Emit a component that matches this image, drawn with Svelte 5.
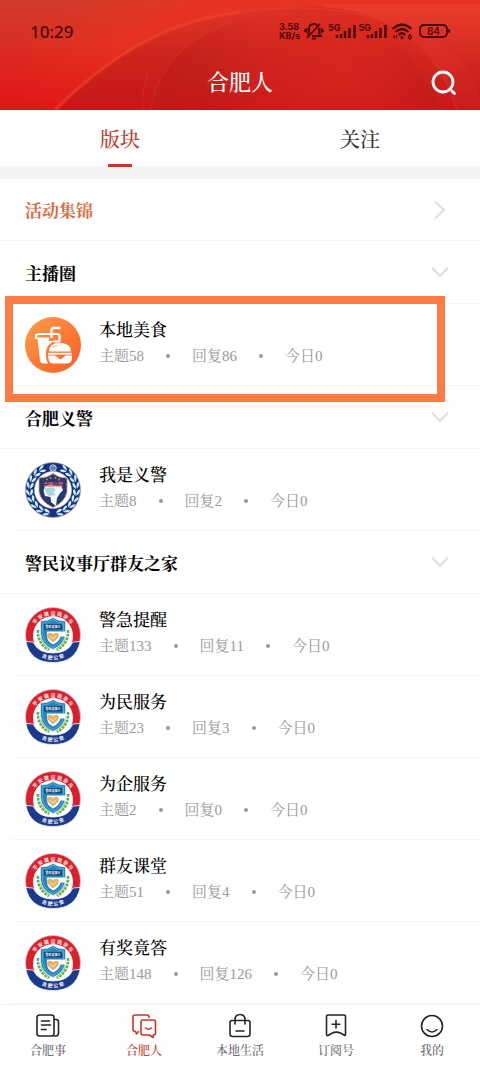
<script>
  const sections = [
    { name: '主播圈', boards: [{ name: '本地美食', logo: 'food', topics: 58, replies: 86, today: 0, marked: true }] },
    { name: '合肥义警', boards: [{ name: '我是义警', logo: 'wreath', topics: 8, replies: 2, today: 0 }] },
    {
      name: '警民议事厅群友之家',
      boards: [
        { name: '警急提醒', logo: 'police', topics: 133, replies: 11, today: 0 },
        { name: '为民服务', logo: 'police', topics: 23, replies: 3, today: 0 },
        { name: '为企服务', logo: 'police', topics: 2, replies: 0, today: 0 },
        { name: '群友课堂', logo: 'police', topics: 51, replies: 4, today: 0 },
        { name: '有奖竟答', logo: 'police', topics: 148, replies: 126, today: 0 }
      ]
    }
  ];
  const nav = [
    { name: '合肥事', icon: 'news' },
    { name: '合肥人', icon: 'chat', active: true },
    { name: '本地生活', icon: 'bag' },
    { name: '订阅号', icon: 'mark' },
    { name: '我的', icon: 'face' }
  ];
  // Angles of the laurel leaves, clockwise from the top of the ring
  const leaves = [28, 45, 62, 79, 96, 113, 130, 147, 164];
</script>

{#snippet food()}
  <svg class="logo" viewBox="0 0 56 56" aria-hidden="true">
    <defs>
      <linearGradient id="foodfill" x1="0" y1="0" x2="1" y2="1">
        <stop offset="0" stop-color="#ff9d4c" /><stop offset="1" stop-color="#fb5a21" />
      </linearGradient>
    </defs>
    <circle cx="28" cy="28" r="28" fill="url(#foodfill)" />
    <path d="M11 22V19.500Q11 17 13.500 17H32Q34.500 17 34.500 19.500V24.500H28" fill="none" stroke="#fff" stroke-width="2.200" />
    <path d="M26.500 21V13Q26.500 11 28.500 11H35.500" fill="none" stroke="#fff" stroke-width="2.400" />
    <path d="M11 20.500H24V24H29Q20.500 28 21 37Q20.500 42 23 46.500H18.500Q15.500 46.500 15 43.500L12.500 22Z" fill="#fff" />
    <path d="M24 34.500Q24 26 34.500 26Q46 26 46 34.500Z" fill="#fff" />
    <path d="M23 38.500H30L35.500 42.500L40.500 38.500H47V42Q46 46.500 42 46.500H28Q24 46 23.500 42Z" fill="#fff" />
    <path d="M23 36.700H47" stroke="#fff" stroke-width="1.800" />
    <path d="M27 30.500Q29 28.500 32 28.500" fill="none" stroke="#ff9b62" stroke-width="0.800" />
  </svg>
{/snippet}

{#snippet wreath()}
  <svg class="logo" viewBox="0 0 56 56" aria-hidden="true">
    <circle cx="28" cy="28" r="27.500" fill="#1b2f7e" stroke="#b9a891" stroke-width="0.800" />
    {#each [1, -1] as side}
      <g transform="translate(28 28) scale({side} 1)">
        {#each leaves as angle}
          <g transform="rotate({angle}) translate(0 -23.200)">
            <path d="M3.500 0.500Q0 4.500 -3.500 2.500Q-1 -0.800 3.500 0.500Z" fill="#c6f5f8" />
            <path d="M3.500 -0.500Q0 -5 -3.500 -3.200Q-1.500 0 3.500 -0.500Z" fill="#b4ebf3" />
          </g>
        {/each}
      </g>
    {/each}
    <circle cx="28" cy="28" r="18.500" fill="#fff" stroke="#d9d4cb" stroke-width="0.600" />
    <circle cx="28" cy="6" r="3.200" fill="#2b4a96" stroke="#d7f4fa" stroke-width="0.900" />
    <path d="M26 5H30M26.500 7H29.500" stroke="#a9e0ee" stroke-width="0.900" />
    <path d="M28 11.500Q34 16 42 16V30Q40 40 28 45.500Q16 40 14 30V16Q22 16 28 11.500Z" fill="#253a72" stroke="#c8a17c" stroke-width="0.900" />
    <path d="M20 24L25 23L31 24L36 23.500L38 28L34.500 32L32 36L31 44L26 40L25.500 35L20 34L18.500 29Z" fill="#f5fbfc" />
    <path d="M20 26L28 25.500L31 28L28 30L31 33L24 34L21 31Z" fill="#a5d8da" />
    <g fill="#e7894f"><circle cx="22" cy="17.500" r="0.900" /><circle cx="25.500" cy="16" r="1" /><circle cx="30.500" cy="16" r="1" /><circle cx="34" cy="17.500" r="0.900" /></g>
    <text x="28" y="24" text-anchor="middle" font-size="5" font-weight="700" fill="#f25c4e">合肥义警</text>
  </svg>
{/snippet}

{#snippet police()}
  <svg class="logo" viewBox="0 0 56 56" aria-hidden="true">
    <defs>
      <path id="toparc" d="M7.500 36A21.500 21.500 0 1 1 48.500 36" />
      <path id="lowarc" d="M10 45A25 25 0 0 0 46 45" />
    </defs>
    <circle cx="28" cy="28" r="27.500" fill="#dc1f2c" stroke="#c6cbd2" stroke-width="0.800" />
    <circle cx="28" cy="29" r="20" fill="#fff" />
    <path d="M0.800 34.500L8 35Q13 46 28 46Q43 46 48 35L55.200 34.500Q51 55.500 28 55.500Q5 55.500 0.800 34.500Z" fill="#1b3a8c" stroke="#fff" stroke-width="0.800" />
    <text font-size="5" font-weight="700" fill="#ffe9e6"><textPath href="#toparc" startOffset="50%" text-anchor="middle">平 安 建 设 我 参 与</textPath></text>
    <text font-size="5" font-weight="700" fill="#fff"><textPath href="#lowarc" startOffset="50%" text-anchor="middle">合 肥 公 安</textPath></text>
    <g fill="none" stroke="#64ad4e" stroke-width="2.600" stroke-dasharray="2.800 1">
      <path d="M13 23Q12 36 24 43" /><path d="M43 23Q44 36 32 43" />
    </g>
    <path d="M16 30Q17 38 25 42M40 30Q39 38 31 42" fill="none" stroke="#a7cf70" stroke-width="1.800" />
    <path d="M28 10.500Q33 14 40.500 14V27Q39.500 37.500 28 42.500Q16.500 37.500 15.500 27V14Q23 14 28 10.500Z" fill="#2386c1" stroke="#d5e8ef" stroke-width="0.800" />
    <path d="M28 12.500Q33 16 38.500 16V27Q37.500 36 28 40.500Q18.500 36 17.500 27V16Q23 16 28 12.500Z" fill="none" stroke="#7dbcdc" stroke-width="0.600" />
    <path d="M40.500 24.500H22Q20.500 34 28 37.500Q34 35 35.500 29.500H40Z" fill="#fff" />
    <path d="M28 35.500L22.500 30.500Q21 26.500 24.500 25.700Q27 25.300 28 27.500Q29.500 25.300 32.500 26Q35 28 33 31Z" fill="#e2b367" />
    <path d="M24.500 29L28 32L31.500 28.500" fill="none" stroke="#fff3d2" stroke-width="0.800" />
    <rect x="19" y="17" width="18" height="5.500" fill="#184779" />
    <text x="28" y="21" text-anchor="middle" font-size="3" font-weight="700" fill="#fff">警民议事厅</text>
  </svg>
{/snippet}

{#snippet navIcon(kind)}
  <svg class="nav-icon" viewBox="0 0 26 26" aria-hidden="true">
    {#if kind === 'news'}
      <rect x="2" y="2" width="17" height="21" rx="2.500" />
      <path d="M19 6.500H21Q23.500 6.500 23.500 9V17.500M19 23H21Q23.500 23 23.500 20V16M6.500 8H14.500M6.500 12H15.500M6.500 16.500H11" />
    {:else if kind === 'chat'}
      <path d="M7.500 18.500L5.500 21L4.500 18.500Q2 18.500 2 16.500V4Q2 2 4 2H16Q18 2 18 4V4.500" />
      <path d="M12 7H22.500Q24.500 7 24.500 9V20Q24.500 22 22.500 22L22 24.500L18.500 22H12Q10 22 10 20V9Q10 7 12 7ZM14.500 15Q17.500 17.500 20.500 15" />
    {:else if kind === 'bag'}
      <path d="M5 7.500H21Q23 7.500 23 9.500V21Q23 23.500 20.500 23.500H5.500Q3 23.500 3 21V9.500Q3 7.500 5 7.500ZM8 11V7Q8 1.500 13 1.500Q18 1.500 18 7V11M9 18H17" />
    {:else if kind === 'mark'}
      <path d="M5 2H21Q22.500 2 22.500 4V21.500Q22.500 23 21 22L17.500 20Q13 18 8.500 20.500L5 22.500Q3.500 23 3.500 21V4Q3.500 2 5 2ZM13 7.500V15M9.200 11.200H16.800" />
    {:else}
      <circle cx="13" cy="13" r="10.500" /><path d="M8 16.500Q13 21.500 18 16.500" />
    {/if}
  </svg>
{/snippet}

{#snippet signal()}
  <span class="signal"><span>5G</span>
    <svg width="22" height="16" viewBox="0 0 22 16" aria-hidden="true"><path d="M2 15V12M6 15V11M10 15V8M14.500 15V5M19.500 15V2" stroke="currentColor" stroke-width="2.600" /></svg>
  </span>
{/snippet}

<div class="page">
  <header>
    <svg class="backdrop" viewBox="0 0 480 110" preserveAspectRatio="none" aria-hidden="true">
      <defs>
        <linearGradient id="base" x1="0" y1="0" x2="0" y2="1"><stop offset="0" stop-color="#d23c2a" /><stop offset="1" stop-color="#dd1817" /></linearGradient>
        <linearGradient id="glow" gradientUnits="userSpaceOnUse" x1="70" y1="0" x2="125" y2="90"><stop offset="0" stop-color="#ea3524" stop-opacity="0" /><stop offset="0.700" stop-color="#e93222" stop-opacity="0.900" /></linearGradient>
        <linearGradient id="lower" x1="0" y1="0" x2="0" y2="1"><stop offset="0.400" stop-color="#dd1817" stop-opacity="0" /><stop offset="1" stop-color="#dd1817" /></linearGradient>
        <linearGradient id="wheel" x1="0" y1="0" x2="0" y2="1"><stop offset="0" stop-color="#e03526" /><stop offset="0.500" stop-color="#cb241e" /><stop offset="1" stop-color="#c81619" /></linearGradient>
        <radialGradient id="center" gradientUnits="userSpaceOnUse" cx="340" cy="66" r="140"><stop offset="0" stop-color="#dc261f" /><stop offset="1" stop-color="#dc261f" stop-opacity="0" /></radialGradient>
        <linearGradient id="inner" gradientUnits="userSpaceOnUse" x1="150" y1="0" x2="270" y2="0"><stop offset="0" stop-color="#b91c19" stop-opacity="0.550" /><stop offset="1" stop-color="#b91c19" stop-opacity="0" /></linearGradient>
        <linearGradient id="edge" gradientUnits="userSpaceOnUse" x1="380" y1="0" x2="480" y2="0"><stop offset="0" stop-color="#b91c1a" stop-opacity="0" /><stop offset="0.600" stop-color="#b91c1a" stop-opacity="0.450" /></linearGradient>
        <linearGradient id="corner" x1="0" y1="0" x2="0" y2="1"><stop offset="0" stop-color="#ea3d2a" /><stop offset="1" stop-color="#bf1719" /></linearGradient>
      </defs>
      <rect width="480" height="110" fill="url(#base)" />
      <rect width="480" height="110" fill="url(#glow)" />
      <rect width="480" height="110" fill="url(#lower)" />
      <path d="M320 4H480V110H440Z" fill="url(#corner)" />
      <path d="M55 110Q105 60 160 34Q220 8 310 6Q430 10 457 110Z" fill="url(#wheel)" />
      <path d="M55 110Q105 60 160 34Q195 18 240 12" fill="none" stroke="#f2482a" stroke-width="5" opacity="0.250" />
      <path d="M55 110Q105 60 160 34Q195 18 240 12" fill="none" stroke="#f0482b" stroke-width="1.500" opacity="0.600" />
      <path d="M151 110Q160 45 240 20L310 8Q430 14 443 110Z" fill="url(#inner)" />
      <path d="M151 110Q160 45 240 20M143 110Q141 90 148 72" fill="none" stroke="#e4472f" opacity="0.350" />
      <path d="M190 110V20L310 6Q430 10 457 110Z" fill="url(#center)" opacity="0.700" />
      <path d="M380 35Q420 60 443 110H390Z" fill="url(#edge)" />
      <path d="M380 14L405 24Q470 50 480 100V110H457Q445 75 425 58Q405 42 380 36Z" fill="#e8302a" opacity="0.200" />
      <path d="M240 12Q330 0 390 24Q440 50 457 110" fill="none" stroke="#ea5139" opacity="0.400" />
    </svg>
    <div class="status">
      <time>10:29</time>
      <div class="indicators">
        <span class="speed"><span>3.58</span><span>KB/s</span></span>
        <svg width="20" height="18" viewBox="0 0 20 18" fill="none" stroke="currentColor" stroke-width="1.800" aria-hidden="true">
          <path d="M5 11V7Q5 2 10 2Q12 2 13.500 3.500M15 6V11L17 14H8M3 16L16 2M8 16.500H12M2.500 6V11M0.800 7.500V10M17.500 6V11M19.200 7.500V10M5 11L3.500 13" />
        </svg>
        {@render signal()}
        {@render signal()}
        <svg width="21" height="17" viewBox="0 0 21 17" fill="none" stroke="currentColor" stroke-width="2.200" aria-hidden="true">
          <path d="M0.500 6Q10 -2.500 19.500 6M3.500 9Q10 3 16.500 9M6.500 12Q10 8.500 13.500 12" />
          <circle cx="10" cy="14.500" r="1.600" fill="currentColor" stroke="none" />
          <path d="M2 12V15.500M4.500 12V15.500M18.500 11Q16.500 12 16.500 14A1.500 1.500 0 1 0 17 13" stroke-width="1.200" />
        </svg>
        <span class="battery">84</span>
      </div>
    </div>
    <div class="titlebar">
      <h1>合肥人</h1>
      <button class="search" aria-label="搜索">
        <svg width="26" height="26" viewBox="0 0 26 26" fill="none" stroke="#fff" stroke-width="2.800" stroke-linecap="round" aria-hidden="true"><circle cx="12" cy="12" r="10" /><path d="M21 21L23.500 23.500" /></svg>
      </button>
    </div>
  </header>

  <div class="tabs" role="tablist">
    <button role="tab" aria-selected="true" class="active">版块</button>
    <button role="tab" aria-selected="false">关注</button>
  </div>

  <main>
    <a class="heading featured" href="#events">活动集锦
      <svg width="12" height="20" viewBox="0 0 12 20" aria-hidden="true"><path d="M1 1.500L10 10L1 18.500" /></svg>
    </a>
    {#each sections as section}
      <section>
        <button class="heading" aria-expanded="true">{section.name}
          <svg width="18" height="12" viewBox="0 0 18 12" aria-hidden="true"><path d="M1 1.500L9 10L17 1.500" /></svg>
        </button>
        {#each section.boards as board}
          <a class="board" class:marked={board.marked} href="#board">
            {#if board.logo === 'food'}{@render food()}{:else if board.logo === 'wreath'}{@render wreath()}{:else}{@render police()}{/if}
            <div class="info">
              <h2>{board.name}</h2>
              <div class="meta"><span>主题{board.topics}</span><i></i><span>回复{board.replies}</span><i></i><span>今日{board.today}</span></div>
            </div>
          </a>
        {/each}
      </section>
    {/each}
  </main>

  <nav>
    {#each nav as entry}
      <a href="#nav" class:active={entry.active}>{@render navIcon(entry.icon)}<span>{entry.name}</span></a>
    {/each}
  </nav>
</div>

<style>
  :global(body) { background: #fff; }
  .page {
    display: flex; flex-direction: column; min-height: 100vh; overflow: hidden;
    font-family: "Liberation Serif", "Noto Serif CJK SC", "Noto Sans CJK SC", serif; color: #111;
  }
  button { border: 0; padding: 0; background: none; font: inherit; color: inherit; }
  a { color: inherit; text-decoration: none; }
  h1, h2 { margin: 0; font-weight: 500; }

  header { position: relative; height: 110px; display: flex; flex-direction: column; }
  .backdrop { position: absolute; inset: 0; width: 100%; height: 100%; }
  .status {
    position: relative; display: flex; align-items: center; justify-content: space-between;
    height: 62px; padding: 0 32px 0 30px; color: #4b0907; font-family: "Noto Sans", sans-serif;
  }
  time { font-size: 17px; font-weight: 500; }
  .indicators { display: flex; align-items: center; gap: 4px; }
  .speed { display: flex; flex-direction: column; font: 700 9px/9px Inter, sans-serif; }
  .signal { display: flex; align-items: center; font: 700 9px/9px Inter, sans-serif; }
  .signal span { align-self: flex-start; }
  .signal svg { margin-left: -5px; }
  .signal + .signal { margin-left: -3px; }
  .battery {
    position: relative; box-sizing: border-box; width: 29px; height: 14px; border: 2px solid; border-radius: 5px;
    margin-left: 2px; text-align: center; font: 600 10px/10px Inter, sans-serif;
  }
  .battery::after { content: ""; position: absolute; right: -4px; top: 3px; width: 2px; height: 4px; background: currentColor; border-radius: 1px; }
  .titlebar { position: relative; display: grid; grid-template-columns: 1fr auto 1fr; align-items: center; height: 42px; padding: 0 23px; color: #fff; }
  h1 { grid-column: 2; font-size: 22px; line-height: 32px; }
  .search { justify-self: end; width: 26px; height: 26px; }
  .search svg { display: block; }

  .tabs { display: flex; height: 56px; border-bottom: 13px solid #f4f4f4; }
  .tabs button { position: relative; flex: 1; font-size: 20px; font-weight: 500; color: #333; }
  .tabs .active { color: #cc3326; }
  .tabs .active::after { content: ""; position: absolute; left: 50%; bottom: -1px; width: 24px; height: 3px; margin-left: -12px; background: #cc3326; }

  main { flex: 1; }
  .heading {
    box-sizing: border-box; width: 100%; height: 63px; display: flex; align-items: center; justify-content: space-between;
    padding: 0 31px 0 25px; border-bottom: 1px solid #f6f6f6; font-size: 17px; font-weight: 700; color: #000;
  }
  .featured { height: 62px; padding-right: 34px; color: #e0693f; }
  .heading path { fill: none; stroke: #dedede; stroke-width: 2; }
  .board { position: relative; box-sizing: border-box; display: flex; align-items: center; gap: 18px; height: 82px; padding: 0 25px; }
  .board::before { content: ""; position: absolute; left: 12px; right: 0; bottom: 0; height: 1px; background: #f6f6f6; }
  .marked::after { content: ""; position: absolute; z-index: 1; inset: -8px 35px -16px 5px; border: 8px solid #ff7a45; }
  .logo { width: 56px; height: 56px; flex: none; font-family: "Noto Sans CJK SC", sans-serif; }
  .info { display: flex; flex-direction: column; gap: 2px; padding-bottom: 4px; }
  h2 { font-size: 17px; line-height: 24px; color: #000; }
  .meta { display: flex; align-items: center; gap: 22px; font-size: 15px; line-height: 22px; color: #999; }
  .meta i { width: 4px; height: 4px; border-radius: 50%; background: #999; }

  nav { box-sizing: border-box; display: flex; height: 62px; border-top: 1px solid #f1f1f1; background: #fff; }
  nav a { flex: 1; display: flex; flex-direction: column; align-items: center; padding-top: 8px; font-size: 12px; line-height: 20px; gap: 2px; font-weight: 500; color: #68686d; }
  .nav-icon { width: 26px; height: 26px; fill: none; stroke: #252527; stroke-width: 1.6; stroke-linecap: round; stroke-linejoin: round; }
  nav .active { color: #cc3326; }
  .active .nav-icon { stroke: #cc3326; }
</style>
